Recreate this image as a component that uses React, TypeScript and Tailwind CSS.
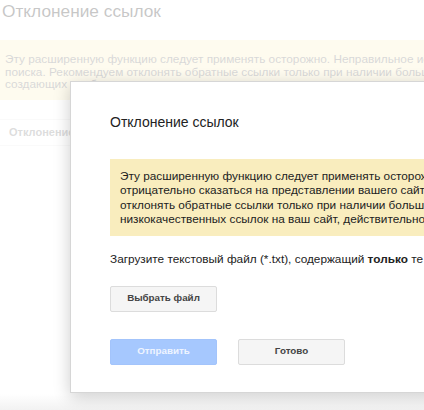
import React from 'react';

const font = { fontFamily: '"Liberation Sans", Arial, sans-serif' };

const Backdrop: React.FC = () => (
  <div className="flex flex-col">
    <h1 className="pl-[2px] text-[17.3px] leading-[22px] text-[#222]">Отклонение ссылок</h1>
    <div className="mt-[18px] h-[60px] bg-[#f9edbe] px-[5px] pt-[13px] text-[11.8px] leading-[12.6px] text-[#666]">
      <p className="whitespace-nowrap">
        Эту расширенную функцию следует применять осторожно. Неправильное использование может отрицательно сказаться
      </p>
      <p className="whitespace-nowrap">
        поиска. Рекомендуем отклонять обратные ссылки только при наличии большого количества спамных ссылок
      </p>
      <p className="whitespace-nowrap">создающих проблемы.</p>
    </div>
    <div className="mt-[19px] flex h-[27px] items-center border-y border-[#ebebeb] pl-[9px] text-[11px] font-bold text-[#777]">
      Отклонение
    </div>
  </div>
);

const Dialog: React.FC = () => (
  <div className="absolute left-[70px] top-[81px] flex w-[620px] flex-col border border-[#d6d6d6] bg-white pb-[27px] pl-[39px] pt-[30px] shadow-[0_4px_16px_rgba(0,0,0,0.2)]">
    <h2 className="text-[14px] leading-[20px] text-[#222]">Отклонение ссылок</h2>
    <div className="mt-[27px] mr-[40px] bg-[#f9edbe] px-[10px] py-[10px] text-[11.8px] leading-[14.3px] text-[#222]">
      <p className="whitespace-nowrap">Эту расширенную функцию следует применять осторожно. Неправильное использование может</p>
      <p className="whitespace-nowrap">отрицательно сказаться на представлении вашего сайта в результатах поиска Google. Рекомендуем</p>
      <p className="whitespace-nowrap">отклонять обратные ссылки только при наличии большого количества спамных, искусственных или</p>
      <p className="whitespace-nowrap">низкокачественных ссылок на ваш сайт, действительно вызывающих проблемы.</p>
    </div>
    <p className="mt-[16px] whitespace-nowrap text-[11.8px] leading-[15px] text-[#222]">
      Загрузите текстовый файл (*.txt), содержащий <b>только</b> те ссылки, которые вы хотите отклонить.
    </p>
    <div className="mt-[17px]">
      <button className="h-[26px] w-[107px] rounded-[2px] border border-[#dcdcdc] bg-[#f5f5f5] text-[9.8px] font-bold text-[#444]">
        Выбрать файл
      </button>
    </div>
    <div className="mt-[27px] flex gap-[21px]">
      <button className="h-[26px] w-[107px] rounded-[2px] border border-[#a3c4fb] bg-[#a6c8fe] text-[9.8px] font-bold text-[#eef4ff]">
        Отправить
      </button>
      <button className="h-[26px] w-[107px] rounded-[2px] border border-[#dcdcdc] bg-[#f5f5f5] text-[9.8px] font-bold text-[#444]">
        Готово
      </button>
    </div>
  </div>
);

export default function App() {
  return (
    <div className="relative h-[410px] w-[424px] overflow-hidden bg-white" style={font}>
      <Backdrop />
      <div className="absolute inset-0 bg-white/75" />
      <div className="absolute bottom-0 left-0 right-0 h-[16px] bg-gradient-to-b from-white to-[#f2f2f2]" />
      <Dialog />
    </div>
  );
}
